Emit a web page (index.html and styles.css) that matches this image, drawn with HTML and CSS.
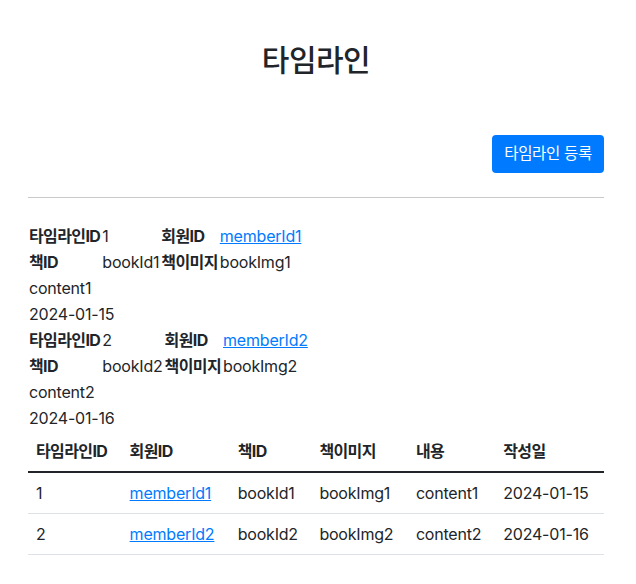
FILE: index.html
```html
<!DOCTYPE html>
<html lang="ko">
<head>
<meta charset="utf-8">
<title>타임라인</title>
<link rel="stylesheet" href="styles.css">
</head>
<body>
<div class="container">
  <h1 class="page-title">타임라인</h1>
  <div class="actions">
    <a class="btn-primary" href="#">타임라인 등록</a>
  </div>
  <hr class="divider">
  <div class="timeline-list">
    <table class="detail">
      <tr><th>타임라인ID</th><td>1</td><th>회원ID</th><td><a class="link" href="#">memberId1</a></td></tr>
      <tr><th>책ID</th><td>bookId1</td><th>책이미지</th><td>bookImg1</td></tr>
      <tr><td colspan="4">content1</td></tr>
      <tr><td colspan="4">2024-01-15</td></tr>
    </table>
    <table class="detail">
      <tr><th>타임라인ID</th><td>2</td><th>회원ID</th><td><a class="link" href="#">memberId2</a></td></tr>
      <tr><th>책ID</th><td>bookId2</td><th>책이미지</th><td>bookImg2</td></tr>
      <tr><td colspan="4">content2</td></tr>
      <tr><td colspan="4">2024-01-16</td></tr>
    </table>
  </div>
  <table class="data-table">
    <thead>
      <tr><th>타임라인ID</th><th>회원ID</th><th>책ID</th><th>책이미지</th><th>내용</th><th>작성일</th></tr>
    </thead>
    <tbody>
      <tr><td>1</td><td><a class="link" href="#">memberId1</a></td><td>bookId1</td><td>bookImg1</td><td>content1</td><td>2024-01-15</td></tr>
      <tr><td>2</td><td><a class="link" href="#">memberId2</a></td><td>bookId2</td><td>bookImg2</td><td>content2</td><td>2024-01-16</td></tr>
    </tbody>
  </table>
</div>
</body>
</html>
```
FILE: styles.css
```css
* { box-sizing: border-box; }
html, body {
  margin: 0;
  background: #fff;
}
body {
  font-family: Inter, "Noto Sans CJK KR", sans-serif;
  font-size: 16px;
  line-height: 24px;
  color: #212529;
  letter-spacing: -0.2px;
}
.container {
  padding: 41px 32px 0 28px;
}
.page-title {
  margin: 0;
  font-size: 30px;
  line-height: 38px;
  font-weight: 500;
  text-align: center;
  letter-spacing: -0.5px;
}
.actions {
  display: flex;
  justify-content: flex-end;
  margin-top: 56px;
}
.btn-primary {
  display: inline-block;
  padding: 7px 12px;
  border-radius: 4px;
  background: #007bff;
  color: #fff;
  text-decoration: none;
  font-size: 15.5px;
  line-height: 24px;
  letter-spacing: -0.3px;
}
.divider {
  margin: 24px 0 25px;
  border: 0;
  border-top: 1px solid #c8c9ca;
}
.detail {
  border-collapse: collapse;
}
.detail th,
.detail td {
  padding: 1px;
  text-align: left;
  vertical-align: top;
}
.detail th {
  font-weight: 700;
  letter-spacing: -0.6px;
}
.link {
  color: #007bff;
  text-decoration: underline;
}
.data-table {
  width: 100%;
  border-collapse: collapse;
}
.data-table th,
.data-table td {
  padding: 8px;
  text-align: left;
}
.data-table th {
  font-weight: 700;
  letter-spacing: -0.6px;
  border-bottom: 2px solid #212529;
}
.data-table td {
  border-bottom: 1px solid #dee2e6;
}
```
